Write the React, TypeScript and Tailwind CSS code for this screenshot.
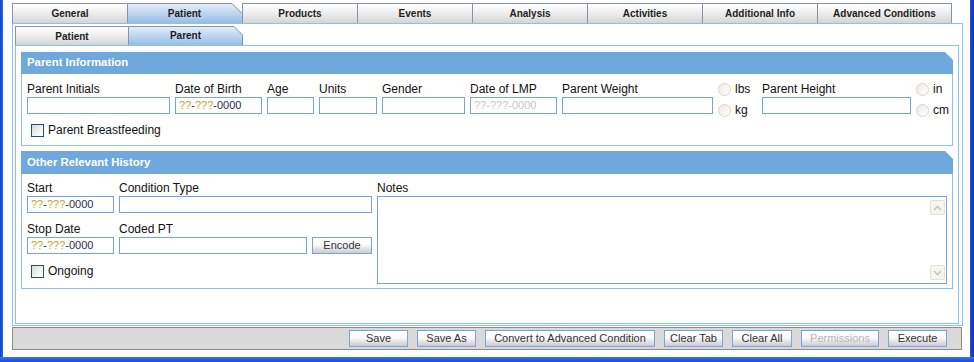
import React from "react";

type TabProps = { label: string; w: number; cls: string; active?: boolean; last?: boolean; h: number; cut: number; id: string };

function Tab({ label, w, cls, active, last, h, cut, id }: TabProps) {
  if (active) {
    return (
      <div className={`relative flex shrink-0 items-center justify-center ${cls}`}>
        <svg className="absolute inset-0" width={w} height={h}>
          <defs>
            <linearGradient id={id} x1="0" y1="0" x2="0" y2="1">
              <stop offset="0" stopColor="#e6f0fb" />
              <stop offset="1" stopColor="#97bce6" />
            </linearGradient>
          </defs>
          <path d={`M0 ${h} V0 H${w - cut} L${w} ${cut} V${h} Z`} fill={`url(#${id})`} />
          <polyline
            points={`0.5,${h} 0.5,0.5 ${w - cut},0.5 ${w - 0.5},${cut} ${last ? `${w - 0.5},${h}` : ""}`}
            fill="none"
            stroke="#8793a8"
            strokeWidth="1"
          />
        </svg>
        <span className="relative font-bold text-[10px] text-[#1e1e1e]">{label}</span>
      </div>
    );
  }
  return (
    <div
      className={`flex shrink-0 items-center justify-center border-l border-t border-[#8793a8] bg-[linear-gradient(to_bottom,#ffffff_0%,#f1f1f1_40%,#d4d4d4_100%)] ${
        last ? "border-r" : ""
      } ${cls}`}
    >
      <span className="font-bold text-[10px] text-[#1e1e1e]">{label}</span>
    </div>
  );
}

function DateMask({ muted }: { muted?: boolean }) {
  if (muted) return <span className="text-[#c6c6c6]">??-???-0000</span>;
  return (
    <span className="text-[#2b2b4a]">
      <span className="text-[#c9a227]">??</span>-<span className="text-[#c9a227]">???</span>-0000
    </span>
  );
}

function Field({ label, cls, date, muted }: { label: string; cls: string; date?: boolean; muted?: boolean }) {
  return (
    <div className={`flex shrink-0 flex-col ${cls}`}>
      <div className="h-[14px] whitespace-nowrap text-[12px] leading-[14px] text-[#111]">{label}</div>
      <div className="mt-[1px] flex h-[17px] items-center border border-[#74a4d9] bg-white pl-[3px] text-[11px]">
        {date ? <DateMask muted={muted} /> : null}
      </div>
    </div>
  );
}

function Radio({ label }: { label: string }) {
  return (
    <div className="flex h-[13px] items-center gap-[4px]">
      <div className="h-[13px] w-[13px] shrink-0 rounded-full border border-[#d9d5c6] bg-[linear-gradient(135deg,#ecebe4,#ffffff)]" />
      <span className="text-[12px] leading-[13px] text-[#111]">{label}</span>
    </div>
  );
}

function Check({ label }: { label: string }) {
  return (
    <div className="flex h-[13px] items-center gap-[4px] pl-[4px]">
      <div className="h-[13px] w-[13px] shrink-0 border border-[#1c5180] bg-[linear-gradient(135deg,#d9d9d2_0%,#f4f4f0_60%,#ffffff_100%)]" />
      <span className="text-[12px] leading-[13px] text-[#111]">{label}</span>
    </div>
  );
}

function Btn({ children, cls, disabled }: { children: React.ReactNode; cls: string; disabled?: boolean }) {
  return (
    <div
      className={`flex h-[17px] shrink-0 items-center justify-center border border-[#7ba4d8] bg-[linear-gradient(to_bottom,#ffffff_0%,#fbfbfb_45%,#e4e4e8_70%,#cacad2_100%)] text-[11px] leading-[15px] ${
        disabled ? "text-[#b6b6be]" : "text-[#333]"
      } ${cls}`}
    >
      {children}
    </div>
  );
}

function SectionHeader({ title, cls }: { title: string; cls: string }) {
  return (
    <div
      className={`flex items-center bg-[#6fa8dc] pl-[6px] text-[11.4px] font-bold text-white [clip-path:polygon(0_0,calc(100%_-_8px)_0,100%_8px,100%_100%,0_100%)] ${cls}`}
    >
      {title}
    </div>
  );
}

function ScrollArrow({ up }: { up?: boolean }) {
  return (
    <div className="flex h-[15px] w-[15px] items-center justify-center rounded-[2px] border border-[#e4e1d4] bg-[#f6f5f0]">
      <svg width="9" height="6" viewBox="0 0 9 6">
        <polyline
          points={up ? "1,5 4.5,1.5 8,5" : "1,1 4.5,4.5 8,1"}
          fill="none"
          stroke="#cbc7b6"
          strokeWidth="1.6"
        />
      </svg>
    </div>
  );
}

export default function App() {
  const topTabs: { label: string; cls: string; w: number; active?: boolean; last?: boolean }[] = [
    { label: "General", cls: "w-[115px]", w: 115 },
    { label: "Patient", cls: "w-[115px]", w: 115, active: true },
    { label: "Products", cls: "w-[115px]", w: 115 },
    { label: "Events", cls: "w-[115px]", w: 115 },
    { label: "Analysis", cls: "w-[115px]", w: 115 },
    { label: "Activities", cls: "w-[115px]", w: 115 },
    { label: "Additional Info", cls: "w-[115px]", w: 115 },
    { label: "Advanced Conditions", cls: "w-[135px]", w: 135, last: true },
  ];

  return (
    <div className="flex h-[362px] w-[974px] flex-col overflow-hidden bg-white font-['Liberation_Sans',Arial,sans-serif]">
      <div className="flex min-h-0 flex-1">
        <div className="w-[3px] shrink-0 bg-[linear-gradient(to_right,#0d3fcf,#2a6ae8)]" />
        <div className="flex flex-1 flex-col pl-[9px] pt-[3px]">
          {/* top tabs */}
          <div className="flex h-[20px]">
            {topTabs.map((t, i) => (
              <Tab key={i} id={`tt${i}`} label={t.label} cls={t.cls} w={t.w} h={20} cut={10} active={t.active} last={t.last} />
            ))}
          </div>
          {/* outer panel */}
          <div className="flex h-[303px] w-[951px] flex-col border border-[#89c2ee] pb-[1px] pl-[2px] pr-[3px] pt-[2px]">
            <div className="flex h-[19px]">
              <Tab id="st0" label="Patient" cls="w-[113px]" w={113} h={19} cut={9} />
              <Tab id="st1" label="Parent" cls="w-[115px]" w={115} h={19} cut={9} active last />
            </div>
            {/* inner panel */}
            <div className="flex flex-1 flex-col border border-[#89c2ee] px-[5px] pt-[6px]">
              {/* Section 1 */}
              <div className="flex flex-col">
                <SectionHeader title="Parent Information" cls="h-[22px]" />
                <div className="flex flex-col border-x border-b border-[#89c2ee] pb-[8px] pl-[5px] pr-[5px] pt-[8px]">
                  <div className="flex items-start gap-[5px]">
                    <Field label="Parent Initials" cls="w-[143px]" />
                    <Field label="Date of Birth" cls="w-[87px]" date />
                    <Field label="Age" cls="w-[47px]" />
                    <Field label="Units" cls="w-[58px]" />
                    <Field label="Gender" cls="w-[83px]" />
                    <Field label="Date of LMP" cls="w-[87px]" date muted />
                    <Field label="Parent Weight" cls="w-[151px]" />
                    <div className="flex w-[39px] shrink-0 flex-col gap-[8px] pt-[1px]">
                      <Radio label="lbs" />
                      <Radio label="kg" />
                    </div>
                    <Field label="Parent Height" cls="w-[149px]" />
                    <div className="flex w-[36px] shrink-0 flex-col gap-[8px] pt-[1px]">
                      <Radio label="in" />
                      <Radio label="cm" />
                    </div>
                  </div>
                  <div className="mt-[7px]">
                    <Check label="Parent Breastfeeding" />
                  </div>
                </div>
              </div>

              {/* Section 2 */}
              <div className="mt-[5px] flex flex-col">
                <SectionHeader title="Other Relevant History" cls="h-[23px]" />
                <div className="flex items-start gap-[5px] border-x border-b border-[#89c2ee] pb-[4px] pl-[5px] pr-[5px] pt-[7px]">
                  <div className="flex w-[345px] shrink-0 flex-col">
                    <div className="flex gap-[5px]">
                      <Field label="Start" cls="w-[87px]" date />
                      <Field label="Condition Type" cls="w-[253px]" />
                    </div>
                    <div className="mt-[9px] flex items-end gap-[5px]">
                      <Field label="Stop Date" cls="w-[87px]" date />
                      <Field label="Coded PT" cls="w-[188px]" />
                      <Btn cls="w-[60px]">Encode</Btn>
                    </div>
                    <div className="mt-[11px]">
                      <Check label="Ongoing" />
                    </div>
                  </div>
                  <div className="flex flex-1 flex-col">
                    <div className="h-[14px] text-[12px] leading-[14px] text-[#111]">Notes</div>
                    <div className="mt-[1px] flex h-[88px] border border-[#74a4d9] bg-white">
                      <div className="flex-1" />
                      <div className="flex flex-col justify-between py-[3px] pr-[1px]">
                        <ScrollArrow up />
                        <ScrollArrow />
                      </div>
                    </div>
                  </div>
                </div>
              </div>
            </div>
          </div>
          {/* button bar */}
          <div className="mt-[1px] flex h-[23px] w-[950px] items-center justify-end gap-[9px] border border-[#8c8c8c] bg-[#d9d9d9] pr-[14px]">
            <Btn cls="w-[59px]">Save</Btn>
            <Btn cls="w-[59px]">Save As</Btn>
            <Btn cls="w-[170px]">Convert to Advanced Condition</Btn>
            <Btn cls="w-[59px]">Clear Tab</Btn>
            <Btn cls="w-[60px]">Clear All</Btn>
            <Btn cls="w-[78px]" disabled>
              Permissions
            </Btn>
            <Btn cls="w-[59px]">Execute</Btn>
          </div>
        </div>
        <div className="w-[4px] shrink-0 bg-[linear-gradient(to_right,#1c55d9,#0a2fb8)]" />
      </div>
      <div className="h-[5px] shrink-0 bg-[linear-gradient(to_bottom,#3a78ec,#1348d6)]" />
    </div>
  );
}
